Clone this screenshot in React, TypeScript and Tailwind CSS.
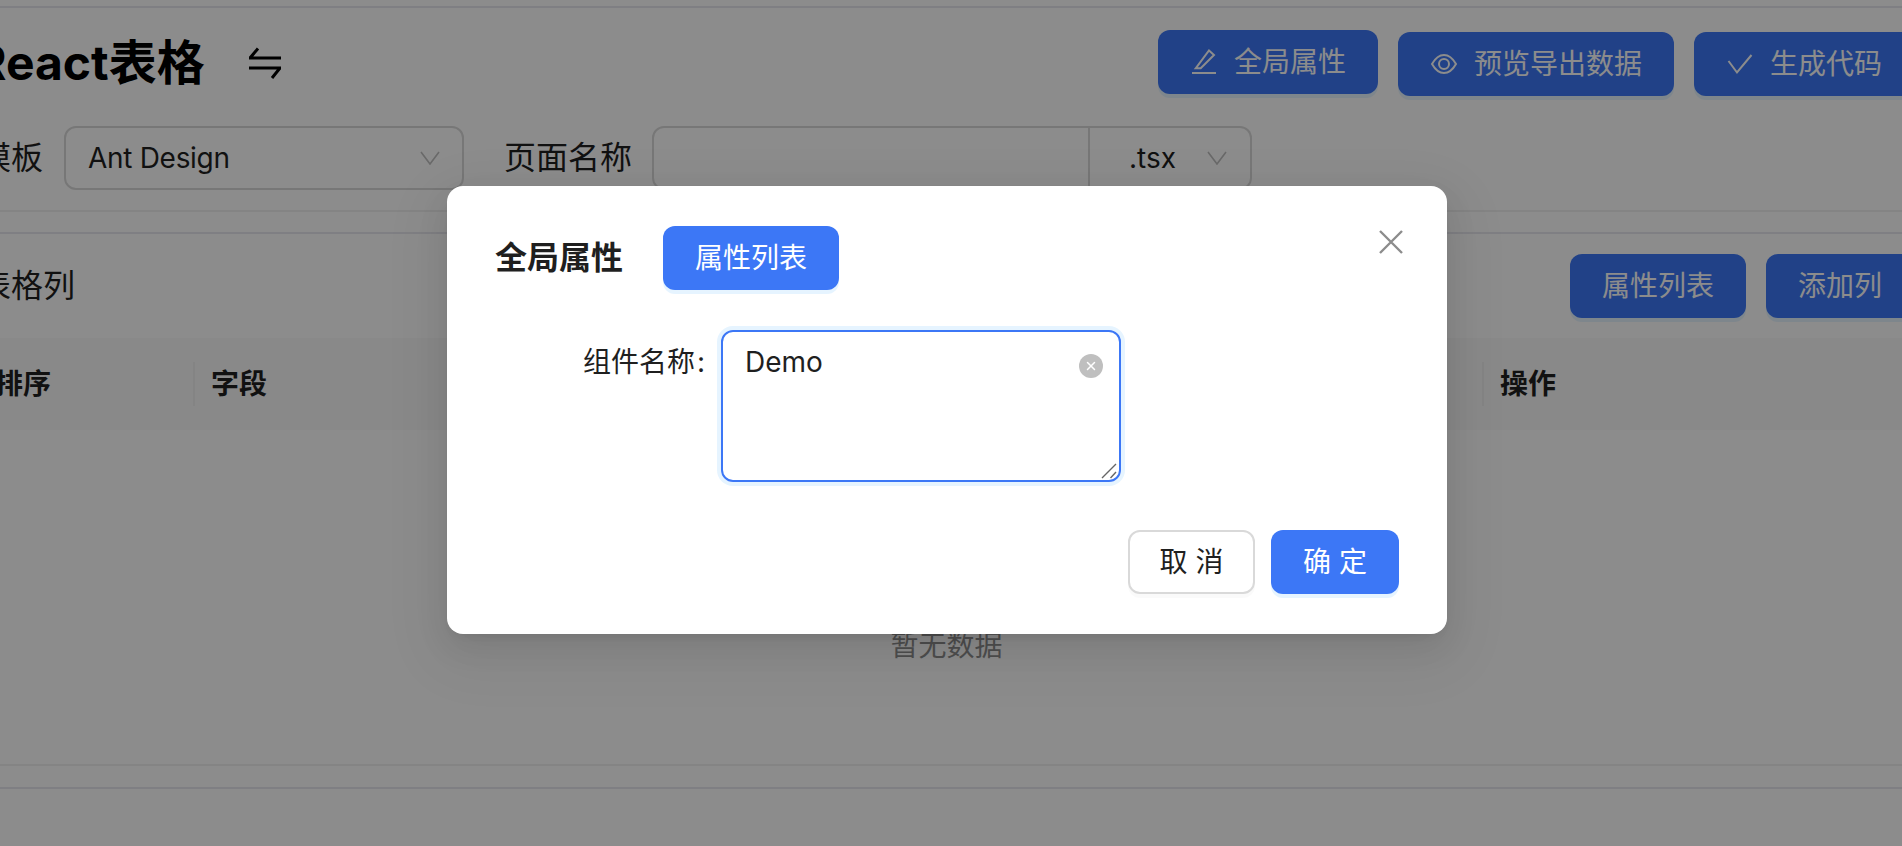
import { X } from "lucide-react";

const font = "font-['Inter','Noto_Sans_CJK_SC',sans-serif]";

function Chevron() {
  return (
    <svg width="20" height="14" viewBox="0 0 20 14" fill="none" stroke="#bfbfbf" strokeWidth="1.6">
      <path d="M1 1 L10 13 L19 1" />
    </svg>
  );
}

function EditIcon() {
  return (
    <svg width="28" height="28" viewBox="0 0 28 28" fill="none" stroke="currentColor" strokeWidth="2">
      <path d="M5.7 20.3 L19 2.5 L24 7 L10.7 20.3 Z" />
      <path d="M2 25 H26" />
    </svg>
  );
}

function EyeIcon() {
  return (
    <svg width="28" height="28" viewBox="0 0 28 28" fill="none" stroke="currentColor" strokeWidth="2">
      <path d="M2 14 C6 7 10 5 14 5 S22 7 26 14 C22 21 18 23 14 23 S6 21 2 14 Z" />
      <circle cx="14" cy="14" r="5" />
    </svg>
  );
}

function CheckIcon() {
  return (
    <svg width="28" height="28" viewBox="0 0 28 28" fill="none" stroke="currentColor" strokeWidth="2">
      <path d="M2.5 11 L11 22.5 L25.5 5" />
    </svg>
  );
}

function SwapIcon() {
  return (
    <svg width="36" height="36" viewBox="0 0 36 36" fill="none" stroke="#000" strokeWidth="3">
      <path d="M2 13 H34 M3 13 L11 3.5" />
      <path d="M34 23 H2 M33 23 L25 33" />
    </svg>
  );
}

function PageButton({ icon, label, className = "" }: { icon?: React.ReactNode; label: string; className?: string }) {
  return (
    <button className={`flex h-16 items-center gap-4 rounded-xl bg-[#3c77f6] px-8 text-[28px] text-white shadow-[0_4px_0_rgba(5,145,255,0.1)] ${className}`}>
      {icon}
      <span>{label}</span>
    </button>
  );
}

export default function App() {
  return (
    <div className={`relative h-[846px] overflow-hidden bg-white text-[#1f1f1f] ${font}`}>
      <div className="-ml-[21px] w-[1935px] pt-[6px]">
        <section className="border-y-2 border-t-[#e8e8ee] border-b-[#f0f0f0] pb-5">
          <div className="flex items-end justify-between pt-[22px]">
            <div className="-ml-[4px] flex items-center gap-[42px] self-center">
              <h1 className="text-[48px] leading-[64px] font-bold text-black">React表格</h1>
              <SwapIcon />
            </div>
            <div className="flex items-end gap-5">
              <PageButton icon={<EditIcon />} label="全局属性" className="mb-[2px]" />
              <PageButton icon={<EyeIcon />} label="预览导出数据" />
              <PageButton icon={<CheckIcon />} label="生成代码" />
            </div>
          </div>
          <div className="mt-[30px] flex items-center">
            <span className="w-[85px] text-[32px]">模板</span>
            <div className="flex h-16 w-[400px] items-center justify-between rounded-xl border-2 border-[#d9d9d9] pr-[22px] pl-[22px] text-[28px]">
              <span className="tracking-[-0.3px]">Ant Design</span>
              <Chevron />
            </div>
            <span className="ml-10 w-[148px] text-[32px]">页面名称</span>
            <div className="flex h-16">
              <input className="h-16 w-[438px] rounded-l-xl border-2 border-[#d9d9d9]" />
              <div className="flex w-[162px] items-center rounded-r-xl border-2 border-l-0 border-[#d9d9d9] pl-[39px] text-[28px]">
                <span>.tsx</span>
                <span className="ml-[31px]">
                  <Chevron />
                </span>
              </div>
            </div>
          </div>
        </section>

        <section className="mt-5 border-t-2 border-[#e8e8ee]">
          <div className="flex items-center justify-between pt-5">
            <span className="text-[32px]">表格列</span>
            <div className="flex gap-5">
              <PageButton label="属性列表" />
              <PageButton label="添加列" />
            </div>
          </div>
          <div className="mt-5 flex h-[92px] items-center bg-[#fafafa] text-[28px] font-semibold">
            <div className="flex h-11 w-[214px] items-center pl-[16px]">排序</div>
            <div className="flex h-11 w-[1289px] items-center border-l-2 border-[#f0f0f0] pl-[16px]">字段</div>
            <div className="flex h-11 flex-1 items-center border-l-2 border-[#f0f0f0] pl-[16px]">操作</div>
          </div>
          <div className="flex h-[336px] justify-center border-b-2 border-[#f0f0f0] pt-[198px] text-[28px] leading-9 text-[#8f8f8f]">
            暂无数据
          </div>
        </section>

        <div className="mt-[21px] border-t-2 border-[#e8e8ee]" />
      </div>

      <div className="absolute inset-0 flex items-start justify-center bg-black/45 pt-[186px] pr-2">
        <div className="relative h-[448px] w-[1000px] rounded-2xl bg-white px-12 pt-10 shadow-[0_12px_32px_0_rgba(0,0,0,0.08),0_6px_12px_-8px_rgba(0,0,0,0.12),0_18px_56px_16px_rgba(0,0,0,0.05)]">
          <button className="absolute top-[44px] right-[44px]">
            <svg className="block" width="24" height="24" viewBox="0 0 24 24" fill="none" stroke="#8c8c8c" strokeWidth="2.4">
              <path d="M1 1 L23 23 M23 1 L1 23" />
            </svg>
          </button>

          <div className="flex items-center gap-10">
            <h2 className="text-[32px] font-semibold">全局属性</h2>
            <PageButton label="属性列表" />
          </div>

          <div className="mt-10 flex items-start">
            <label className="flex w-[226px] justify-end pt-3 text-[28px] leading-10">
              组件名称<span className="mr-4 ml-[2px]">:</span>
            </label>
            <div className="relative">
              <textarea
                defaultValue="Demo"
                className="block h-[152px] w-[400px] resize-none rounded-xl border-2 border-[#3c77f6] px-[22px] py-[10px] text-[28px] leading-10 shadow-[0_0_0_4px_rgba(5,145,255,0.1)] outline-none"
              />
              <span className="absolute top-6 right-[18px] flex h-6 w-6 items-center justify-center rounded-full bg-[#bfbfbf] text-white">
                <X size={14} strokeWidth={1.5} absoluteStrokeWidth />
              </span>
              <svg className="absolute right-[2px] bottom-[2px]" width="18" height="18" viewBox="0 0 18 18" stroke="#666" strokeWidth="1.4" fill="none">
                <path d="M1 16 L15 2 M9.5 16 L15 10" />
              </svg>
            </div>
          </div>

          <div className="mt-12 flex justify-end gap-4">
            <button className="flex h-16 w-[127px] items-center justify-center rounded-xl border-2 border-[#d9d9d9] bg-white text-[28px] shadow-[0_4px_0_rgba(0,0,0,0.02)]">
              <span className="-mr-2 tracking-[8px]">取消</span>
            </button>
            <button className="flex h-16 w-[128px] items-center justify-center rounded-xl bg-[#3c77f6] text-[28px] text-white shadow-[0_4px_0_rgba(5,145,255,0.1)]">
              <span className="-mr-2 tracking-[8px]">确定</span>
            </button>
          </div>
        </div>
      </div>
    </div>
  );
}
